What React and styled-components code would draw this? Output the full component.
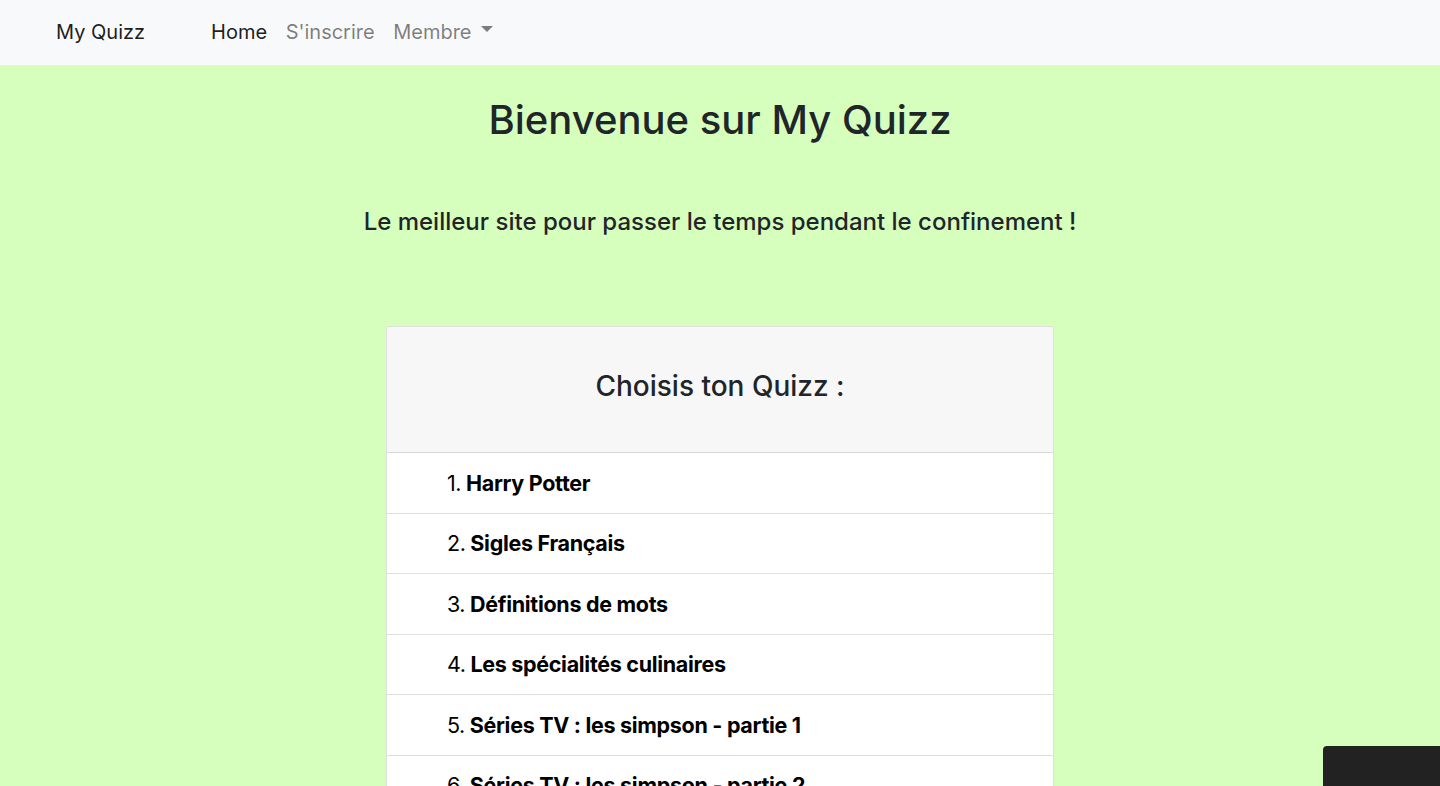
import React from "react";
import styled, { createGlobalStyle } from "styled-components";

const GlobalStyle = createGlobalStyle`
  body {
    margin: 0;
    font-family: Inter, "Noto Sans", sans-serif;
    background: #d6ffbe;
    color: #212529;
  }
`;

const Navbar = styled.nav`
  height: 65px;
  background: #f8f9fa;
  display: flex;
  align-items: center;
  padding-left: 56px;
  padding-bottom: 2px;
  box-sizing: border-box;
  font-size: 20px;
`;

const Brand = styled.span`
  color: rgba(0, 0, 0, 0.9);
  margin-right: 66px;
`;

const NavLink = styled.span`
  color: ${(p) => (p.active ? "rgba(0,0,0,0.9)" : "rgba(0,0,0,0.5)")};
  margin-right: 18.5px;
  display: inline-flex;
  align-items: center;
`;

const Caret = styled.span`
  display: inline-block;
  margin-left: 9px;
  margin-bottom: 6px;
  border-top: 6px solid rgba(0, 0, 0, 0.5);
  border-left: 6px solid transparent;
  border-right: 6px solid transparent;
`;

const Main = styled.main`
  display: flex;
  flex-direction: column;
  align-items: center;
`;

const Title = styled.h1`
  font-size: 40px;
  font-weight: 500;
  margin: 31px 0 0;
  line-height: 48px;
`;

const Subtitle = styled.p`
  font-size: 24px;
  font-weight: 500;
  margin: 63px 0 0;
  line-height: 30px;
`;

const Card = styled.div`
  width: 666px;
  margin-top: 89px;
  background: #fff;
  border: 1px solid rgba(0, 0, 0, 0.125);
  border-radius: 4px;
  overflow: hidden;
`;

const CardHeader = styled.div`
  height: 125px;
  background: #f7f7f7;
  border-bottom: 1px solid rgba(0, 0, 0, 0.125);
  display: flex;
  align-items: center;
  justify-content: center;
`;

const CardTitle = styled.h3`
  font-size: 28px;
  font-weight: 500;
  margin: 0 0 8px;
`;

const Item = styled.div`
  box-sizing: border-box;
  height: 60.5px;
  display: flex;
  align-items: center;
  padding-left: 60px;
  font-size: 21.5px;
  color: #000;
  border-bottom: 1px solid rgba(0, 0, 0, 0.125);
`;

const Num = styled.span`
  margin-right: 5px;
  letter-spacing: -0.5px;
`;

const Name = styled.strong`
  font-weight: 700;
  letter-spacing: -0.3px;
`;

const Widget = styled.div`
  position: fixed;
  right: 0;
  bottom: 0;
  width: 117px;
  height: 40px;
  background: #222;
  border-top-left-radius: 4px;
`;

const quizzes = [
  "Harry Potter",
  "Sigles Français",
  "Définitions de mots",
  "Les spécialités culinaires",
  "Séries TV : les simpson - partie 1",
  "Séries TV : les simpson - partie 2",
  "Séries TV : les simpson - partie 3",
];

export default function App() {
  return (
    <>
      <GlobalStyle />
      <Navbar>
        <Brand>My Quizz</Brand>
        <NavLink active>Home</NavLink>
        <NavLink>S'inscrire</NavLink>
        <NavLink>
          Membre
          <Caret />
        </NavLink>
      </Navbar>
      <Main>
        <Title>Bienvenue sur My Quizz</Title>
        <Subtitle>Le meilleur site pour passer le temps pendant le confinement !</Subtitle>
        <Card>
          <CardHeader>
            <CardTitle>Choisis ton Quizz :</CardTitle>
          </CardHeader>
          {quizzes.map((q, i) => (
            <Item key={q}>
              <Num>{i + 1}.</Num>
              <Name>{q}</Name>
            </Item>
          ))}
        </Card>
      </Main>
      <Widget />
    </>
  );
}
